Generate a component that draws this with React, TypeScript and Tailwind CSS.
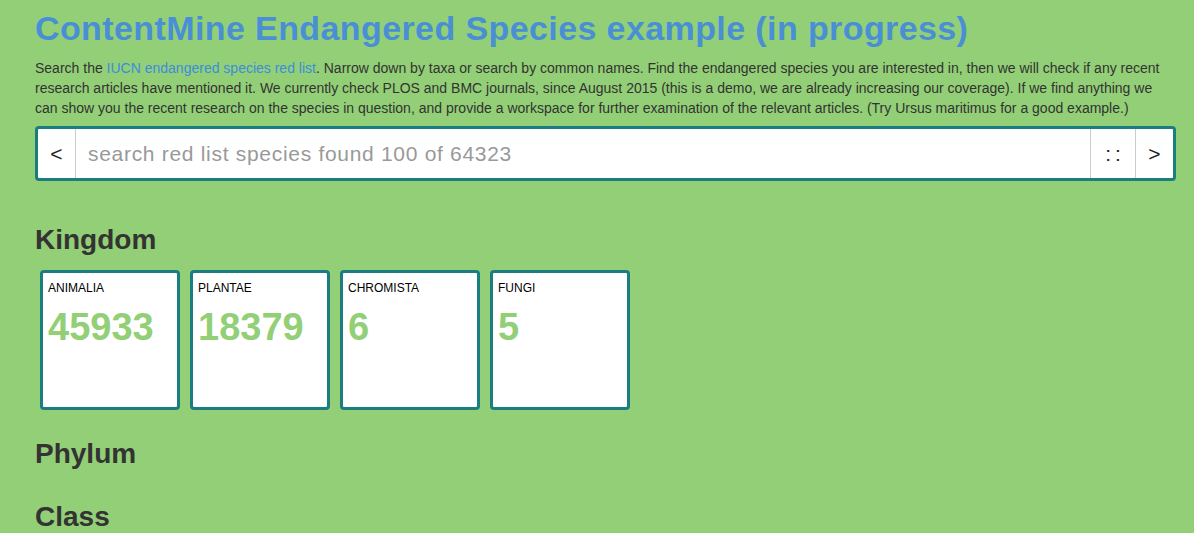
export default function App() {
  const kingdoms = [
    { name: "ANIMALIA", count: "45933" },
    { name: "PLANTAE", count: "18379" },
    { name: "CHROMISTA", count: "6" },
    { name: "FUNGI", count: "5" },
  ];
  return (
    <div className="min-h-[533px] bg-[#92cf76] text-[#333] font-['Liberation_Sans',Arial,sans-serif]">
      <div className="px-[35px] w-[1211px] pt-[8px]">
        <h1 className="text-[34px] leading-[40px] tracking-[0.4px] text-[#4a8fd6] font-bold">
          ContentMine Endangered Species example (in progress)
        </h1>
        <p className="mt-[10px] text-[14px] leading-[20px] text-[#333] w-[1140px]">
          Search the <span className="text-[#3d8ddc]">IUCN endangered species red list</span>. Narrow down by taxa or search by common names. Find the endangered species you are interested in, then we will check if any recent research articles have mentioned it. We currently check PLOS and BMC journals, since August 2015 (this is a demo, we are already increasing our coverage). If we find anything we can show you the recent research on the species in question, and provide a workspace for further examination of the relevant articles. (Try Ursus maritimus for a good example.)
        </p>
        <div className="mt-[8px] w-[1141px] h-[55px] border-[3px] border-[#1a7d80] rounded-[4px] bg-white flex items-stretch text-[21px] text-[#222]">
          <div className="w-[38px] border-r border-[#ccc] flex items-center justify-center">&lt;</div>
          <div className="flex-1 flex items-center pl-[12px] text-[#999] tracking-[0.7px]">search red list species found 100 of 64323</div>
          <div className="w-[45px] border-l border-[#ccc] flex items-center justify-center tracking-[4px] pl-[4px]">::</div>
          <div className="w-[38px] border-l border-[#ccc] flex items-center justify-center">&gt;</div>
        </div>
        <h2 className="mt-[43px] text-[28px] leading-[31px] font-bold text-[#333]">Kingdom</h2>
        <div className="mt-[15px] flex gap-[10px] pl-[5px]">
          {kingdoms.map((k) => (
            <div key={k.name} className="w-[140px] h-[140px] border-[3px] border-[#1a7d80] rounded-[4px] bg-white px-[5px] pt-[7px]">
              <div className="text-[12px] leading-[17px] text-black">{k.name}</div>
              <div className="mt-[10px] text-[38px] leading-[40px] font-bold text-[#92cf76]">{k.count}</div>
            </div>
          ))}
        </div>
        <h2 className="mt-[28px] text-[28px] leading-[31px] font-bold text-[#333]">Phylum</h2>
        <h2 className="mt-[32px] text-[28px] leading-[31px] font-bold text-[#333]">Class</h2>
      </div>
    </div>
  );
}
